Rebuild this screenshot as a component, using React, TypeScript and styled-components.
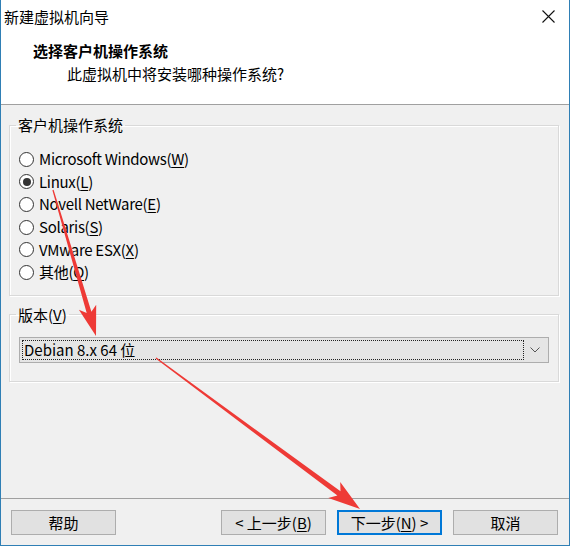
import React from "react";
import styled, { createGlobalStyle } from "styled-components";

const Global = createGlobalStyle`
  html, body { margin: 0; padding: 0; background: #ffffff; }
  body { font-family: "Noto Sans CJK SC", "Noto Sans", sans-serif; color: #000; }
  * { box-sizing: border-box; }
`;

const Window = styled.div`
  position: relative;
  width: 570px;
  height: 546px;
  display: flex;
  flex-direction: column;
  background: #f0f0f0;
  border-left: 1px solid #2f7fb5;
  border-right: 1px solid #2f7fb5;
  border-bottom: 1px solid #2f7fb5;
  font-size: 15px;
  overflow: hidden;
`;

const TitleBar = styled.div`
  height: 33px;
  display: flex;
  align-items: center;
  justify-content: space-between;
  padding: 0 14px 0 3px;
  background: #fff;
  font-size: 15px;
  line-height: 20px;
`;

const Header = styled.div`
  height: 72px;
  background: #fff;
  border-bottom: 1px solid #a0a0a0;
  padding: 8px 0 0 32px;
  display: flex;
  flex-direction: column;
`;

const HeaderTitle = styled.div`
  font-weight: 700;
  font-size: 15px;
  line-height: 20px;
`;

const HeaderSub = styled.div`
  font-size: 15px;
  line-height: 20px;
  margin: 3px 0 0 34px;
`;

const Body = styled.div`
  flex: 1;
  padding: 10px 10px 0 8px;
  display: flex;
  flex-direction: column;
`;

const Group = styled.fieldset<{ $top?: number }>`
  margin: ${(p) => p.$top ?? 0}px 0 0 0;
  min-width: 0;
  border: 1px solid #d9d9d9;
  box-shadow: inset 1px 1px 0 #ffffff, 1px 1px 0 #ffffff;
  padding: 0 6px 11px 6px;
`;

const Legend = styled.legend`
  padding: 0 2px;
  font-size: 15px;
  line-height: 20px;
  color: #000;
`;

const RadioList = styled.div`
  display: flex;
  flex-direction: column;
  padding: 13px 0 0 3px;
`;

const RadioRow = styled.label`
  height: 22.6px;
  display: flex;
  align-items: center;
  gap: 5px;
  font-size: 15px;
  line-height: 20px;
  letter-spacing: -0.3px;
  white-space: nowrap;
`;

const RadioCircle = styled.span<{ $checked?: boolean }>`
  width: 15px;
  height: 15px;
  border-radius: 50%;
  border: 1px solid #333;
  background: #fff;
  display: flex;
  align-items: center;
  justify-content: center;
  flex: none;
  &::after {
    content: "";
    width: 8px;
    height: 8px;
    border-radius: 50%;
    background: ${(p) => (p.$checked ? "#333" : "transparent")};
  }
`;

const U = styled.span`
  text-decoration: underline;
  text-underline-offset: 2px;
`;

const Select = styled.div`
  margin: 12px 3px 7px 3px;
  height: 26px;
  border: 1px solid #adadad;
  background: #e5e5e5;
  display: flex;
  align-items: center;
  padding: 2px;
`;

const SelectValue = styled.div`
  flex: 1;
  height: 100%;
  border: 1px dotted #222;
  display: flex;
  align-items: center;
  padding-left: 1px;
  font-size: 15px;
  line-height: 20px;
`;

const Chevron = styled.div`
  width: 22px;
  display: flex;
  align-items: center;
  justify-content: center;
`;

const Footer = styled.div`
  border-top: 1px solid #a0a0a0;
  padding: 11px 11px 10px 10px;
  display: flex;
  align-items: center;
`;

const Spacer = styled.div`
  flex: 1;
`;

const ButtonGroup = styled.div`
  display: flex;
  gap: 11px;
`;

const Button = styled.button<{ $default?: boolean }>`
  width: 105px;
  height: 25px;
  margin: 0;
  padding: 0;
  font-family: inherit;
  font-size: 15px;
  line-height: 20px;
  color: #000;
  background: #e1e1e1;
  border: ${(p) => (p.$default ? "2px solid #0078d7" : "1px solid #adadad")};
  white-space: nowrap;
`;

const Overlay = styled.svg`
  position: absolute;
  left: -1px;
  top: 0;
  pointer-events: none;
`;

function arrow(tail: [number, number], tip: [number, number], headLen: number, headHalf: number, shaftHalf: number) {
  const dx = tip[0] - tail[0];
  const dy = tip[1] - tail[1];
  const len = Math.hypot(dx, dy);
  const ux = dx / len;
  const uy = dy / len;
  const nx = -uy;
  const ny = ux;
  const bx = tip[0] - ux * headLen;
  const by = tip[1] - uy * headLen;
  const nbx = tip[0] - ux * headLen * 0.82;
  const nby = tip[1] - uy * headLen * 0.82;
  const pts = [
    [tail[0] + nx * 0.6, tail[1] + ny * 0.6],
    [nbx + nx * shaftHalf, nby + ny * shaftHalf],
    [bx + nx * headHalf, by + ny * headHalf],
    [tip[0], tip[1]],
    [bx - nx * headHalf, by - ny * headHalf],
    [nbx - nx * shaftHalf, nby - ny * shaftHalf],
    [tail[0] - nx * 0.6, tail[1] - ny * 0.6],
  ];
  return pts.map((p) => p.map((v) => v.toFixed(1)).join(",")).join(" ");
}

const options: { pre: string; key: string; post: string; checked?: boolean }[] = [
  { pre: "Microsoft Windows(", key: "W", post: ")" },
  { pre: "Linux(", key: "L", post: ")", checked: true },
  { pre: "Novell NetWare(", key: "E", post: ")" },
  { pre: "Solaris(", key: "S", post: ")" },
  { pre: "VMware ESX(", key: "X", post: ")" },
  { pre: "其他(", key: "O", post: ")" },
];

export default function App() {
  return (
    <>
      <Global />
      <Window>
        <TitleBar>
          <span>新建虚拟机向导</span>
          <svg width="13" height="13" viewBox="0 0 13 13">
            <path d="M0.5 0.5 L12.5 12.5 M12.5 0.5 L0.5 12.5" stroke="#111" strokeWidth="1.1" fill="none" />
          </svg>
        </TitleBar>
        <Header>
          <HeaderTitle>选择客户机操作系统</HeaderTitle>
          <HeaderSub>此虚拟机中将安装哪种操作系统?</HeaderSub>
        </Header>
        <Body>
          <Group>
            <Legend>客户机操作系统</Legend>
            <RadioList>
              {options.map((o) => (
                <RadioRow key={o.key}>
                  <RadioCircle $checked={o.checked} />
                  <span>
                    {o.pre}
                    <U>{o.key}</U>
                    {o.post}
                  </span>
                </RadioRow>
              ))}
            </RadioList>
          </Group>
          <Group $top={9}>
            <Legend>
              版本(<U>V</U>)
            </Legend>
            <Select>
              <SelectValue>Debian 8.x 64 位</SelectValue>
              <Chevron>
                <svg width="10" height="6" viewBox="0 0 10 6">
                  <path d="M0.5 0.5 L5 5 L9.5 0.5" stroke="#555" strokeWidth="1" fill="none" />
                </svg>
              </Chevron>
            </Select>
          </Group>
        </Body>
        <Footer>
          <Button>帮助</Button>
          <Spacer />
          <ButtonGroup>
            <Button>
              &lt; 上一步(<U>B</U>)
            </Button>
            <Button $default>
              下一步(<U>N</U>) &gt;
            </Button>
            <Button>取消</Button>
          </ButtonGroup>
        </Footer>
        <Overlay width="570" height="546" viewBox="0 0 570 546">
          <polygon points={arrow([53, 190], [96, 336], 30, 9, 2.4)} fill="#ee3a36" />
          <polygon points={arrow([156, 358], [360, 509], 32, 10, 2.6)} fill="#ee3a36" />
        </Overlay>
      </Window>
    </>
  );
}
